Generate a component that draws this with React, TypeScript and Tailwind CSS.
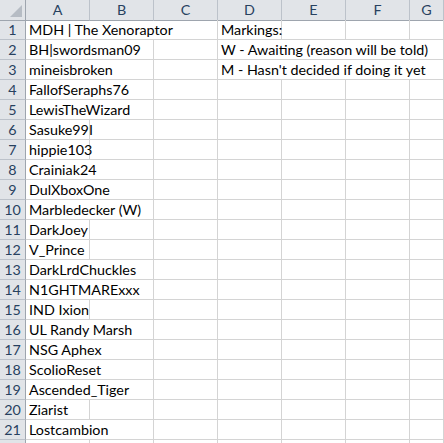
const cols = ["A", "B", "C", "D", "E", "F", "G"];

type Cell = { text: string; span: number };

// column A names, span = how many columns the text runs over
const names: [string, number][] = [
	["MDH | The Xenoraptor", 3],
	["BH|swordsman09", 2],
	["mineisbroken", 2],
	["FallofSeraphs76", 2],
	["LewisTheWizard", 2],
	["Sasuke99I", 1],
	["hippie103", 1],
	["Crainiak24", 2],
	["DulXboxOne", 2],
	["Marbledecker (W)", 2],
	["DarkJoey", 1],
	["V_Prince", 1],
	["DarkLrdChuckles", 2],
	["N1GHTMAREx" + "xx", 2],
	["IND Ixion", 1],
	["UL Randy Marsh", 2],
	["NSG Aphex", 2],
	["ScolioReset", 2],
	["Ascended_Tiger", 2],
	["Ziarist", 1],
	["Lostcambion", 2],
	["", 1], // row 22, only its top edge shows
];

const notes: Record<number, Cell> = {
	0: { text: "Markings:", span: 1 },
	1: { text: "W - Awaiting (reason will be told)", span: 4 },
	2: { text: "M - Hasn't decided if doing it yet", span: 4 },
};

const rowCells = (i: number): Cell[] => {
	const [name, span] = names[i];
	const cells: Cell[] = [{ text: name, span }];
	for (let k = span; k < 3; k++) cells.push({ text: "", span: 1 });
	const note = notes[i];
	if (note) {
		cells.push(note);
		for (let k = note.span; k < 4; k++) cells.push({ text: "", span: 1 });
	} else {
		for (let k = 0; k < 4; k++) cells.push({ text: "", span: 1 });
	}
	return cells;
};

const spanClass: Record<number, string> = {
	1: "col-span-1",
	2: "col-span-2",
	3: "col-span-3",
	4: "col-span-4",
};

export default function App() {
	return (
		<div
			className="w-[444px] h-[443px] overflow-hidden bg-white text-[14.3px] text-black"
			style={{ fontFamily: "Lato, 'Open Sans', sans-serif" }}
		>
			<div className="grid grid-cols-[26px_64px_64px_64px_64px_64px_64px_1fr] auto-rows-[20px]">
				{/* header row */}
				<div className="h-[21px] relative bg-[#e1e4e8] border-r border-b border-[#9ea5ae]">
					<div className="absolute right-[3px] bottom-[3px] w-0 h-0 border-l-[12px] border-l-transparent border-b-[12px] border-b-[#b6bcc4]" />
				</div>
				{cols.map((c) => (
					<div
						key={c}
						className="h-[21px] flex items-center justify-center bg-[#e1e4e8] border-r border-b border-r-[#bcc2ca] border-b-[#9ea5ae] text-[#27415f]"
					>
						{c}
					</div>
				))}
				{names.map((_, i) => (
					<div key={i} className="contents">
						<div className="flex items-center justify-center bg-[#e1e4e8] border-r border-b border-r-[#9ea5ae] border-b-[#bcc2ca] text-[#27415f]">
							{i < 21 ? i + 1 : ""}
						</div>
						{rowCells(i).map((cell, j) => (
							<div
								key={j}
								className={`${spanClass[cell.span]} flex items-center pl-[3px] whitespace-nowrap border-r border-b border-[#d4d4d4]`}
							>
								{cell.text}
							</div>
						))}
					</div>
				))}
			</div>
		</div>
	);
}
